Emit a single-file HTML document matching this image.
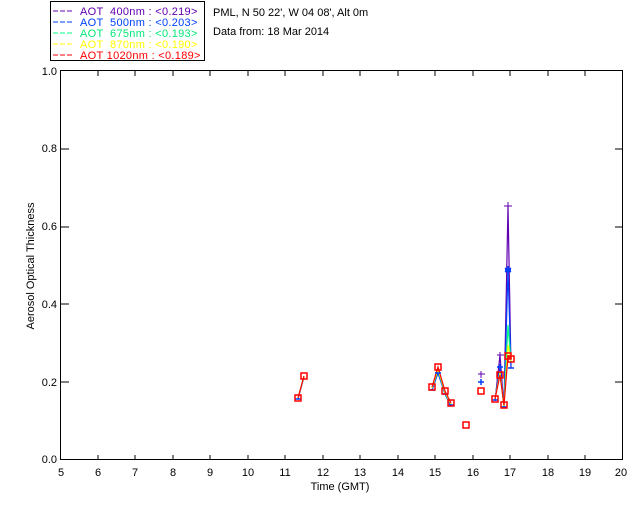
<!DOCTYPE html>
<html><head><style>
body{margin:0;background:#fff;width:640px;height:512px;overflow:hidden}
svg{display:block}
text{font-family:"Liberation Sans",sans-serif;font-size:11px}
</style></head><body>
<svg width="640" height="512" viewBox="0 0 640 512">
<rect x="50.5" y="1.5" width="154" height="59" fill="#fff" stroke="#000"/>
<g font-size="11" letter-spacing="0.3">
<line x1="53" y1="11" x2="73" y2="11" stroke="#6000b0" stroke-dasharray="5,2"/><text x="80" y="15" fill="#6000b0" xml:space="preserve">AOT  400nm : &lt;0.219&gt;</text>
<line x1="53" y1="22" x2="73" y2="22" stroke="#0040ff" stroke-dasharray="5,2"/><text x="80" y="26" fill="#0040ff" xml:space="preserve">AOT  500nm : &lt;0.203&gt;</text>
<line x1="53" y1="33" x2="73" y2="33" stroke="#00ff80" stroke-dasharray="5,2"/><text x="80" y="37" fill="#00e878" xml:space="preserve">AOT  675nm : &lt;0.193&gt;</text>
<line x1="53" y1="44" x2="73" y2="44" stroke="#ffff00" stroke-dasharray="5,2"/><text x="80" y="48" fill="#ffff00" xml:space="preserve">AOT  870nm : &lt;0.190&gt;</text>
<line x1="53" y1="55" x2="73" y2="55" stroke="#ff0000" stroke-dasharray="5,2"/><text x="80" y="59" fill="#ff0000" xml:space="preserve">AOT 1020nm : &lt;0.189&gt;</text>
</g>
<text x="213" y="16" font-size="10">PML, N 50 22', W 04 08', Alt 0m</text>
<text x="213" y="35" font-size="10.5">Data from: 18 Mar 2014</text>
<rect x="60.5" y="70.5" width="562" height="389" fill="none" stroke="#000"/>
<g stroke="#000">
<path d="M98 460v-5M135 460v-5M173 460v-5M210 460v-5M248 460v-5M285 460v-5M323 460v-5M360 460v-5M398 460v-5M435 460v-5M473 460v-5M510 460v-5M548 460v-5M585 460v-5"/>
<path d="M98 71v5M135 71v5M173 71v5M210 71v5M248 71v5M285 71v5M323 71v5M360 71v5M398 71v5M435 71v5M473 71v5M510 71v5M548 71v5M585 71v5"/>
<path d="M61 382h8M61 304h8M61 227h8M61 149h8M623 382h-8M623 304h-8M623 227h-8M623 149h-8"/>
</g>
<g font-size="10" text-anchor="end">
<text x="57" y="463">0.0</text><text x="57" y="386">0.2</text><text x="57" y="308">0.4</text><text x="57" y="230">0.6</text><text x="57" y="152">0.8</text><text x="57" y="75">1.0</text>
</g>
<g font-size="10" text-anchor="middle">
<text x="61" y="476">5</text><text x="98" y="476">6</text><text x="135" y="476">7</text><text x="173" y="476">8</text><text x="210" y="476">9</text><text x="248" y="476">10</text><text x="285" y="476">11</text><text x="323" y="476">12</text><text x="360" y="476">13</text><text x="398" y="476">14</text><text x="435" y="476">15</text><text x="473" y="476">16</text><text x="510" y="476">17</text><text x="548" y="476">18</text><text x="585" y="476">19</text><text x="621" y="476">20</text>
<text x="340" y="490">Time (GMT)</text>
</g>
<text font-size="10" transform="translate(34,266) rotate(-90)" text-anchor="middle">Aerosol Optical Thickness</text>
<g fill="none" stroke-width="1.2">
<path stroke="#6000b0" d="M298 399L304 376M432 390L438 372L445 394L451 406M495 401L500 355L504 408L508 206L511 368"/>
<path stroke="#0040ff" d="M298 399L304 377M432 390L438 373L445 394L451 405M495 400L500 367L504 407L508 270L511 366"/>
<path stroke="#00ff80" d="M298 398L304 376M432 388L438 370L445 393L451 404M495 399L500 372L504 406L508 325L511 362"/>
<path stroke="#ffff00" d="M298 398L304 376M432 388L438 369L445 392L451 404M495 399L500 373L504 406L508 345L511 361"/>
<path stroke="#ff0000" d="M298 398L304 376M432 387L438 367L445 391L451 403M495 399L500 375L504 405L508 356L511 359"/>
</g>
<g stroke="#6000b0"><path d="M478 374h7M481 371v7M497 355h7M500 352v7M504 206h8M508 202v8M505 269h6M508 266v6"/></g>
<g stroke="#0040ff" stroke-width="1.5"><path d="M478 382h6M481 379v6M497 367h6M500 364v6M505 270h6M508 266v8M505 268l6 4M505 272l6-4M429 390h6M435 373h6M442 394h6M448 405h6M295 399h6M492 400h6M501 407h6M508 368h6"/></g>
<g fill="none" stroke="#ff0000" stroke-width="1.5">
<rect x="295" y="395" width="6" height="6"/><rect x="301" y="373" width="6" height="6"/>
<rect x="429" y="384" width="6" height="6"/><rect x="435" y="364" width="6" height="6"/><rect x="442" y="388" width="6" height="6"/><rect x="448" y="400" width="6" height="6"/><rect x="463" y="422" width="6" height="6"/><rect x="478" y="388" width="6" height="6"/><rect x="492" y="396" width="6" height="6"/><rect x="497" y="372" width="6" height="6"/><rect x="501" y="402" width="6" height="6"/><rect x="505" y="353" width="6" height="6"/><rect x="508" y="356" width="6" height="6"/>
</g>
</svg>
</body></html>
